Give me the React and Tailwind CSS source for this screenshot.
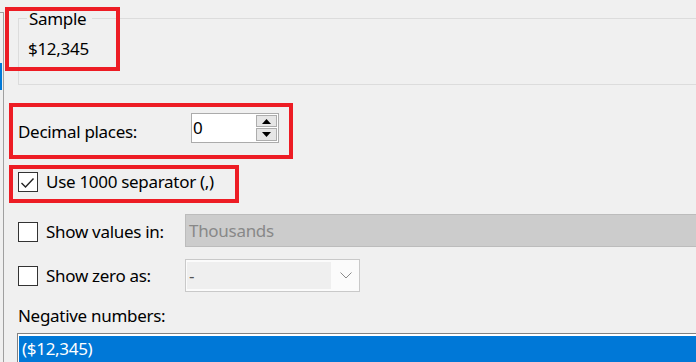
export default function App() {
  return (
    <div className="relative flex w-[696px] h-[362px] overflow-hidden bg-[#f0f0f0] text-black font-['Noto_Sans',sans-serif] text-[17px] leading-[24px] tracking-[-0.3px]">
      {/* left strip */}
      <div className="w-[3px] shrink-0 flex flex-col">
        <div className="h-[12px]" />
        <div className="h-px bg-[#a0a0a0]" />
        <div className="h-[50px]" />
        <div className="h-[27px] w-[2px] bg-[#0078d7]" />
      </div>

      {/* panel */}
      <div className="flex-1 mt-[12px] border-l border-[#a0a0a0] pl-[14px] flex flex-col">
        {/* Sample group box */}
        <div className="mt-[6px] w-[700px] h-[67px] shrink-0 border border-[#dcdcdc] pl-[8px]">
          <div className="-mt-[12px] w-fit bg-[#f0f0f0] pl-[2px] pr-[6px]">Sample</div>
          <div className="mt-[6px] pl-[1px]">$12,345</div>
        </div>

        {/* Decimal places */}
        <div className="mt-[28px] flex items-start h-[30px] shrink-0">
          <div className="w-[173px] mt-[7px]">Decimal places:</div>
          <div className="w-[88px] h-[30px] border border-[#ababab] bg-white flex">
            <div className="flex-1 pl-[1px] leading-[28px]">0</div>
            <div className="flex flex-col pt-[1px] pr-[1px] gap-[1px]">
              <div className="w-[21px] h-[12px] border border-[#adadad] bg-[#e6e6e6] flex items-center justify-center">
                <svg width="9" height="5" viewBox="0 0 9 5"><polygon points="0,5 9,5 4.5,0" fill="#000" /></svg>
              </div>
              <div className="w-[21px] h-[13px] border border-[#adadad] bg-[#e6e6e6] flex items-center justify-center">
                <svg width="9" height="5" viewBox="0 0 9 5"><polygon points="0,0 9,0 4.5,5" fill="#000" /></svg>
              </div>
            </div>
          </div>
        </div>

        {/* Use 1000 separator */}
        <div className="mt-[27px] flex items-center h-[24px] shrink-0">
          <div className="w-[20px] h-[20px] border border-[#333] bg-white">
            <svg width="18" height="18" viewBox="0 0 18 18">
              <polyline points="2.5,10 6.5,14 14.5,5.5" fill="none" stroke="#222" strokeWidth="1.4" />
            </svg>
          </div>
          <div className="ml-[8px]">Use 1000 separator (,)</div>
        </div>

        {/* Show values in */}
        <div className="mt-[20px] flex items-center h-[33px] shrink-0">
          <div className="w-[167px] shrink-0 flex items-center pt-[2px]">
            <div className="w-[20px] h-[20px] border border-[#333] bg-white" />
            <div className="ml-[8px]">Show values in:</div>
          </div>
          <div className="w-[520px] shrink-0 h-[33px] border border-[#bcbcbc] bg-[#cccccc] pl-[3px] text-[#888] leading-[31px]">
            Thousands
          </div>
        </div>

        {/* Show zero as */}
        <div className="mt-[12px] flex items-center h-[33px] shrink-0">
          <div className="w-[167px] shrink-0 flex items-center">
            <div className="w-[20px] h-[20px] border border-[#333] bg-white" />
            <div className="ml-[8px]">Show zero as:</div>
          </div>
          <div className="w-[175px] shrink-0 h-[33px] border border-[#c9c9c9] bg-[#fbfbfb] px-[1px] py-[2px] flex">
            <div className="w-[144px] bg-[#efefef] pl-[2px] leading-[27px] text-[#555]">-</div>
            <div className="flex-1 flex items-center justify-center pl-[2px]">
              <svg width="12" height="7" viewBox="0 0 12 7">
                <polyline points="0.5,0.5 6,6 11.5,0.5" fill="none" stroke="#8a8a8a" strokeWidth="1" />
              </svg>
            </div>
          </div>
        </div>

        {/* Negative numbers */}
        <div className="mt-[12px] shrink-0">Negative numbers:</div>
        <div className="mt-[5px] -ml-[1px] w-[700px] shrink-0 border border-[#828282] bg-white pt-[2px] pl-[1px]">
          <div className="bg-[#0078d7] text-white pl-[3px] pt-[1px] h-[40px]">($12,345)</div>
        </div>
      </div>

      {/* annotation boxes */}
      <div className="absolute left-[5px] top-[7px] w-[115px] h-[64px] border-4 border-[#ed1c24]" />
      <div className="absolute left-[9px] top-[103px] w-[284px] h-[56px] border-4 border-[#ed1c24]" />
      <div className="absolute left-[9px] top-[165px] w-[230px] h-[38px] border-4 border-[#ed1c24]" />
    </div>
  );
}
